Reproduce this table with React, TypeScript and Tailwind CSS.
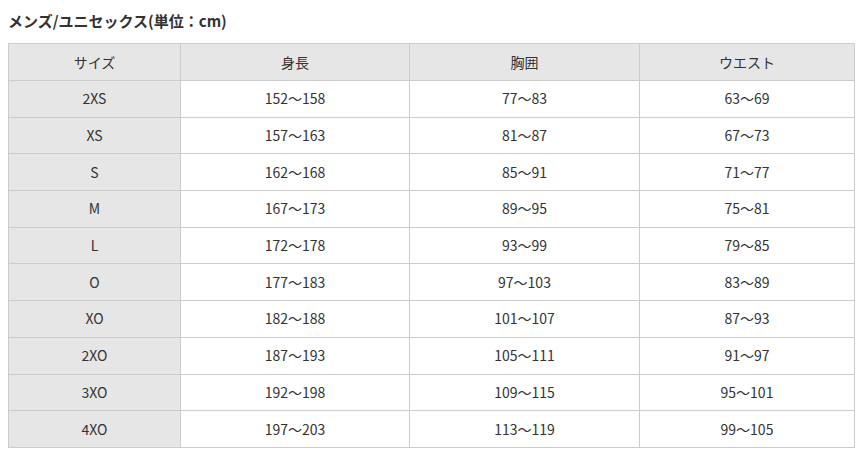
const rows = [
  ["2XS", "152〜158", "77〜83", "63〜69"],
  ["XS", "157〜163", "81〜87", "67〜73"],
  ["S", "162〜168", "85〜91", "71〜77"],
  ["M", "167〜173", "89〜95", "75〜81"],
  ["L", "172〜178", "93〜99", "79〜85"],
  ["O", "177〜183", "97〜103", "83〜89"],
  ["XO", "182〜188", "101〜107", "87〜93"],
  ["2XO", "187〜193", "105〜111", "91〜97"],
  ["3XO", "192〜198", "109〜115", "95〜101"],
  ["4XO", "197〜203", "113〜119", "99〜105"],
];

export default function App() {
  return (
    <div
      className="w-[864px] h-[465px] bg-white text-[#333] pl-[8px] pt-[10px]"
      style={{ fontFamily: '"Noto Sans CJK JP", "Noto Sans", sans-serif' }}
    >
      <h2 className="text-[15px] font-bold leading-[22px] h-[33px]">メンズ/ユニセックス(単位：cm)</h2>
      <table className="border-collapse text-[14px] text-center table-fixed w-[846px]">
        <colgroup>
          <col className="w-[172px]" />
          <col className="w-[229px]" />
          <col className="w-[230px]" />
          <col className="w-[215px]" />
        </colgroup>
        <thead>
          <tr className="h-[37px] bg-[#e6e6e6]">
            {["サイズ", "身長", "胸囲", "ウエスト"].map((h) => (
              <th key={h} className="border border-[#cccccc] font-normal p-0">
                {h}
              </th>
            ))}
          </tr>
        </thead>
        <tbody>
          {rows.map((r) => (
            <tr key={r[0]} className="h-[36.7px]">
              {r.map((c, i) => (
                <td
                  key={i}
                  className={`border border-[#cccccc] p-0 ${i === 0 ? "bg-[#e6e6e6]" : ""}`}
                >
                  {c}
                </td>
              ))}
            </tr>
          ))}
        </tbody>
      </table>
    </div>
  );
}
